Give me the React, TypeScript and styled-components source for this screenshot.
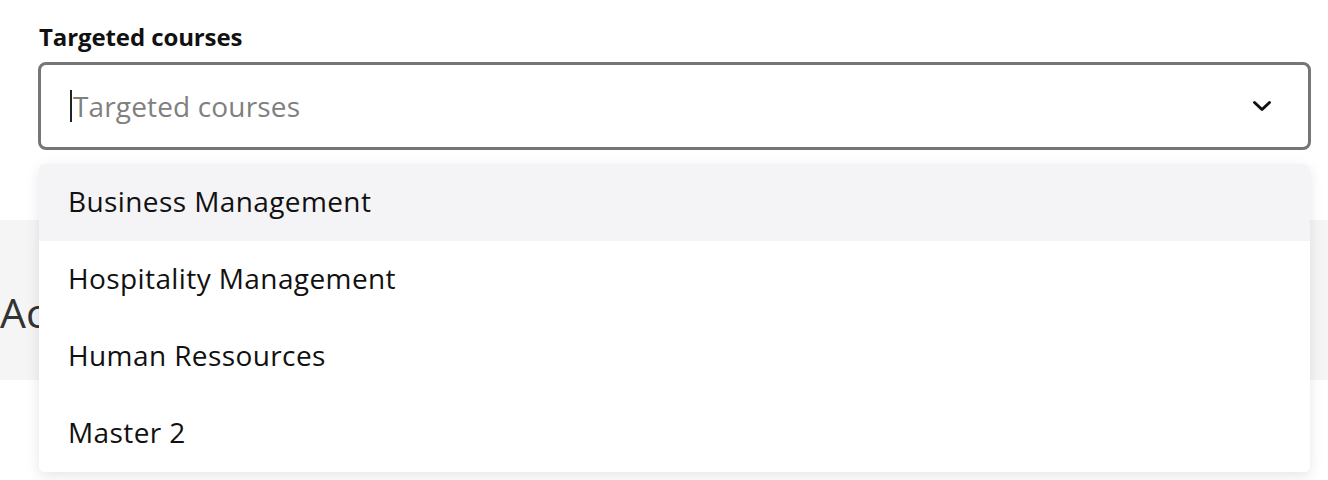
import React from "react";
import styled, { createGlobalStyle } from "styled-components";

const GlobalStyle = createGlobalStyle`
  body {
    margin: 0;
    background: #fff;
    font-family: "Open Sans", "Noto Sans", sans-serif;
    color: #111;
  }
`;

const Page = styled.div`
  width: 1328px;
  height: 480px;
  overflow: hidden;
  position: relative;
`;

const Field = styled.div`
  position: relative;
  padding: 21px 17px 0 38px;
  display: flex;
  flex-direction: column;
  gap: 10px;
`;

const Label = styled.label`
  font-size: 24px;
  font-weight: 700;
  letter-spacing: -0.1px;
  color: #111;
  padding-left: 1px;
  line-height: 31px;
`;

const SelectBox = styled.div`
  height: 88px;
  box-sizing: border-box;
  border: 3px solid #767676;
  border-radius: 8px;
  display: flex;
  align-items: center;
  padding: 0 36px 0 29px;
  background: #fff;
`;

const Placeholder = styled.span`
  flex: 1;
  font-size: 28px;
  letter-spacing: 0.15px;
  color: #808080;
  border-left: 2px solid #222;
  line-height: 32px;
  padding-left: 1px;
`;

const Menu = styled.ul`
  position: absolute;
  top: 164px;
  left: 39px;
  right: 18px;
  margin: 0;
  padding: 0;
  list-style: none;
  background: #fff;
  border-radius: 6px;
  box-shadow: 0 4px 14px rgba(0, 0, 0, 0.1);
  overflow: hidden;
  z-index: 2;
`;

const Option = styled.li<{ $active?: boolean }>`
  height: 77px;
  box-sizing: border-box;
  display: flex;
  align-items: center;
  padding: 0 0 3px 29px;
  font-size: 28px;
  letter-spacing: 0.4px;
  color: #111;
  background: ${(p) => (p.$active ? "#f4f4f6" : "#fff")};
`;

const Band = styled.section`
  margin-top: 70px;
  height: 160px;
  background: #f5f5f6;
  display: flex;
  align-items: center;
`;

const BandTitle = styled.h2`
  margin: 0;
  padding: 24px 0 0 0;
  font-size: 41px;
  font-weight: 400;
  color: #333;
`;

const Chevron = () => (
  <svg width="20" height="14" viewBox="0 0 20 14" fill="none">
    <path d="M2.5 3.5 L10 10.5 L17.5 3.5" stroke="#111" strokeWidth="3" strokeLinecap="round" strokeLinejoin="round" />
  </svg>
);

const courses = ["Business Management", "Hospitality Management", "Human Ressources", "Master 2"];

export default function App() {
  return (
    <Page>
      <GlobalStyle />
      <Field>
        <Label>Targeted courses</Label>
        <SelectBox>
          <Placeholder>Targeted courses</Placeholder>
          <Chevron />
        </SelectBox>
        <Menu>
          {courses.map((c, i) => (
            <Option key={c} $active={i === 0}>{c}</Option>
          ))}
        </Menu>
      </Field>
      <Band>
        <BandTitle>Access</BandTitle>
      </Band>
    </Page>
  );
}
